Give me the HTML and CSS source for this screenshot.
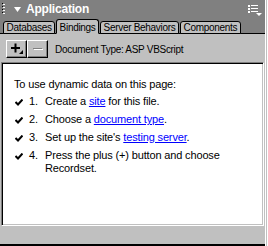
FILE: index.html
```html
<!DOCTYPE html>
<html lang="en">
	<head>
		<meta charset="UTF-8" />
		<title>Application</title>
		<link rel="stylesheet" href="styles.css">
	</head>
	<body>
		<div class="panel">
			<div class="titlebar">
				<svg class="gripper" width="4" height="12" viewBox="0 0 4 12">
					<rect x="0" y="0" width="1" height="1" fill="#000" /><rect x="2" y="1" width="1" height="1" fill="#fff" />
					<rect x="0" y="3" width="1" height="1" fill="#000" /><rect x="2" y="4" width="1" height="1" fill="#fff" />
					<rect x="0" y="6" width="1" height="1" fill="#000" /><rect x="2" y="7" width="1" height="1" fill="#fff" />
					<rect x="0" y="9" width="1" height="1" fill="#000" /><rect x="2" y="10" width="1" height="1" fill="#fff" />
					<rect x="1" y="1" width="1" height="1" fill="#fff" /><rect x="1" y="4" width="1" height="1" fill="#fff" />
					<rect x="1" y="7" width="1" height="1" fill="#fff" /><rect x="1" y="10" width="1" height="1" fill="#fff" />
				</svg>
				<svg class="arrow" width="7" height="5" viewBox="0 0 7 5"><polygon points="0,0 7,0 3.5,5" fill="#fff" /></svg>
				<span class="title">Application</span>
				<svg class="menu" width="14" height="11" viewBox="0 0 14 11">
					<rect x="0" y="0" width="2" height="2" fill="#fff" /><rect x="3" y="0" width="7" height="1" fill="#fff" />
					<rect x="0" y="3" width="2" height="2" fill="#fff" /><rect x="3" y="3" width="7" height="1" fill="#fff" />
					<rect x="0" y="6" width="2" height="2" fill="#fff" /><rect x="3" y="6" width="7" height="1" fill="#fff" />
					<polygon points="8,8 14,8 11,11" fill="#fff" />
				</svg>
			</div>
			<div class="tabs">
				<div class="tab">Databases</div>
				<div class="tab active">Bindings</div>
				<div class="tab">Server Behaviors</div>
				<div class="tab">Components</div>
			</div>
			<div class="main">
				<div class="toolbar">
					<button class="tool">
						<svg width="12" height="12" viewBox="0 0 12 12">
							<rect x="0" y="4" width="9" height="2" fill="#000" />
							<rect x="3.5" y="0.5" width="2" height="9" fill="#000" />
							<polygon points="8,11 12,11 12,7" fill="#000" />
						</svg>
					</button>
					<button class="tool">
						<svg width="12" height="12" viewBox="0 0 12 12">
							<rect x="1" y="5" width="9" height="1" fill="#808080" />
							<rect x="2" y="6" width="9" height="1" fill="#fff" />
						</svg>
					</button>
					<span class="doctype">Document Type: ASP VBScript</span>
				</div>
				<div class="content">
					<p class="intro">To use dynamic data on this page:</p>
					<ol class="steps">
						<li><svg class="check" width="8" height="7" viewBox="0 0 8 7"><polyline points="0.5,3 3,5.5 7.5,0.5" fill="none" stroke="#000" stroke-width="2" /></svg><span class="num">1.</span><span>Create a <a href="#">site</a> for this file.</span></li>
						<li><svg class="check" width="8" height="7" viewBox="0 0 8 7"><polyline points="0.5,3 3,5.5 7.5,0.5" fill="none" stroke="#000" stroke-width="2" /></svg><span class="num">2.</span><span>Choose a <a href="#">document type</a>.</span></li>
						<li><svg class="check" width="8" height="7" viewBox="0 0 8 7"><polyline points="0.5,3 3,5.5 7.5,0.5" fill="none" stroke="#000" stroke-width="2" /></svg><span class="num">3.</span><span>Set up the site's <a href="#">testing server</a>.</span></li>
						<li><svg class="check" width="8" height="7" viewBox="0 0 8 7"><polyline points="0.5,3 3,5.5 7.5,0.5" fill="none" stroke="#000" stroke-width="2" /></svg><span class="num">4.</span><span>Press the plus (+) button and choose<br />Recordset.</span></li>
					</ol>
				</div>
			</div>
		</div>
		<div class="edge"></div>
	</body>
</html>
```

FILE: styles.css
```css
* {
	padding: 0;
	margin: 0;
	box-sizing: border-box;
}
body {
	display: flex;
	width: 268px;
	height: 246px;
	background: #c0c0c0;
	font-family: "Liberation Sans", Arial, sans-serif;
	overflow: hidden;
}
.panel {
	width: 265px;
	height: 246px;
	display: flex;
	flex-direction: column;
	border-bottom: 2px solid #000;
}
.edge {
	width: 3px;
	border-left: 1px solid #fff;
	border-right: 1px solid #fff;
	background: #c0c0c0;
}
.titlebar {
	height: 17px;
	background: #808080;
	display: flex;
	align-items: center;
	padding-left: 2px;
	color: #fff;
}
.gripper {
	margin-top: 1px;
}
.arrow {
	margin-left: 8px;
	margin-top: 2px;
}
.title {
	margin-left: 5px;
	font-size: 12px;
	font-weight: bold;
	letter-spacing: -0.2px;
}
.menu {
	margin-left: auto;
	margin-right: 3px;
	margin-top: 3px;
}
.tabs {
	height: 17px;
	background: #808080;
	display: flex;
	align-items: flex-end;
	padding-left: 3px;
	gap: 1px;
	border-bottom: 1px solid #000;
}
.tab {
	height: 13px;
	margin-bottom: -1px;
	padding: 0 2.5px;
	background: #c0c0c0;
	border: 1px solid #000;
	border-radius: 3px 3px 0 0;
	font-size: 10px;
	letter-spacing: -0.3px;
	line-height: 11px;
	color: #000;
}
.tab.active {
	height: 15px;
	padding-top: 2px;
	border-bottom-color: #c0c0c0;
}
.main {
	flex: 1;
	display: flex;
	flex-direction: column;
	padding: 0 1px 18px 1px;
}
.toolbar {
	height: 28px;
	display: flex;
	align-items: center;
	padding-left: 5px;
	padding-top: 2px;
}
.tool {
	width: 21px;
	height: 18px;
	background: #c0c0c0;
	border: 1px solid;
	border-color: #fff #000 #000 #fff;
	box-shadow: inset -1px -1px #808080;
	display: flex;
	align-items: center;
	justify-content: center;
}
.doctype {
	margin-left: 7px;
	font-size: 10px;
	letter-spacing: -0.3px;
	color: #000;
}
.content {
	flex: 1;
	background: #fff;
	border: 1px solid;
	border-color: #808080 #fff #fff #808080;
	box-shadow: inset 1px 1px #000, inset -1px -1px #c0c0c0;
	padding: 15px 0 0 12px;
	font-size: 11px;
	line-height: 13px;
	letter-spacing: -0.15px;
}
.intro {
	margin-bottom: 4px;
}
.steps {
	list-style: none;
}
.steps li {
	display: flex;
	align-items: flex-start;
	margin-bottom: 5px;
}
.check {
	margin-top: 4px;
	margin-left: 1px;
}
.num {
	margin-left: 6px;
	width: 16px;
}
a {
	color: #0000ff;
}
```
